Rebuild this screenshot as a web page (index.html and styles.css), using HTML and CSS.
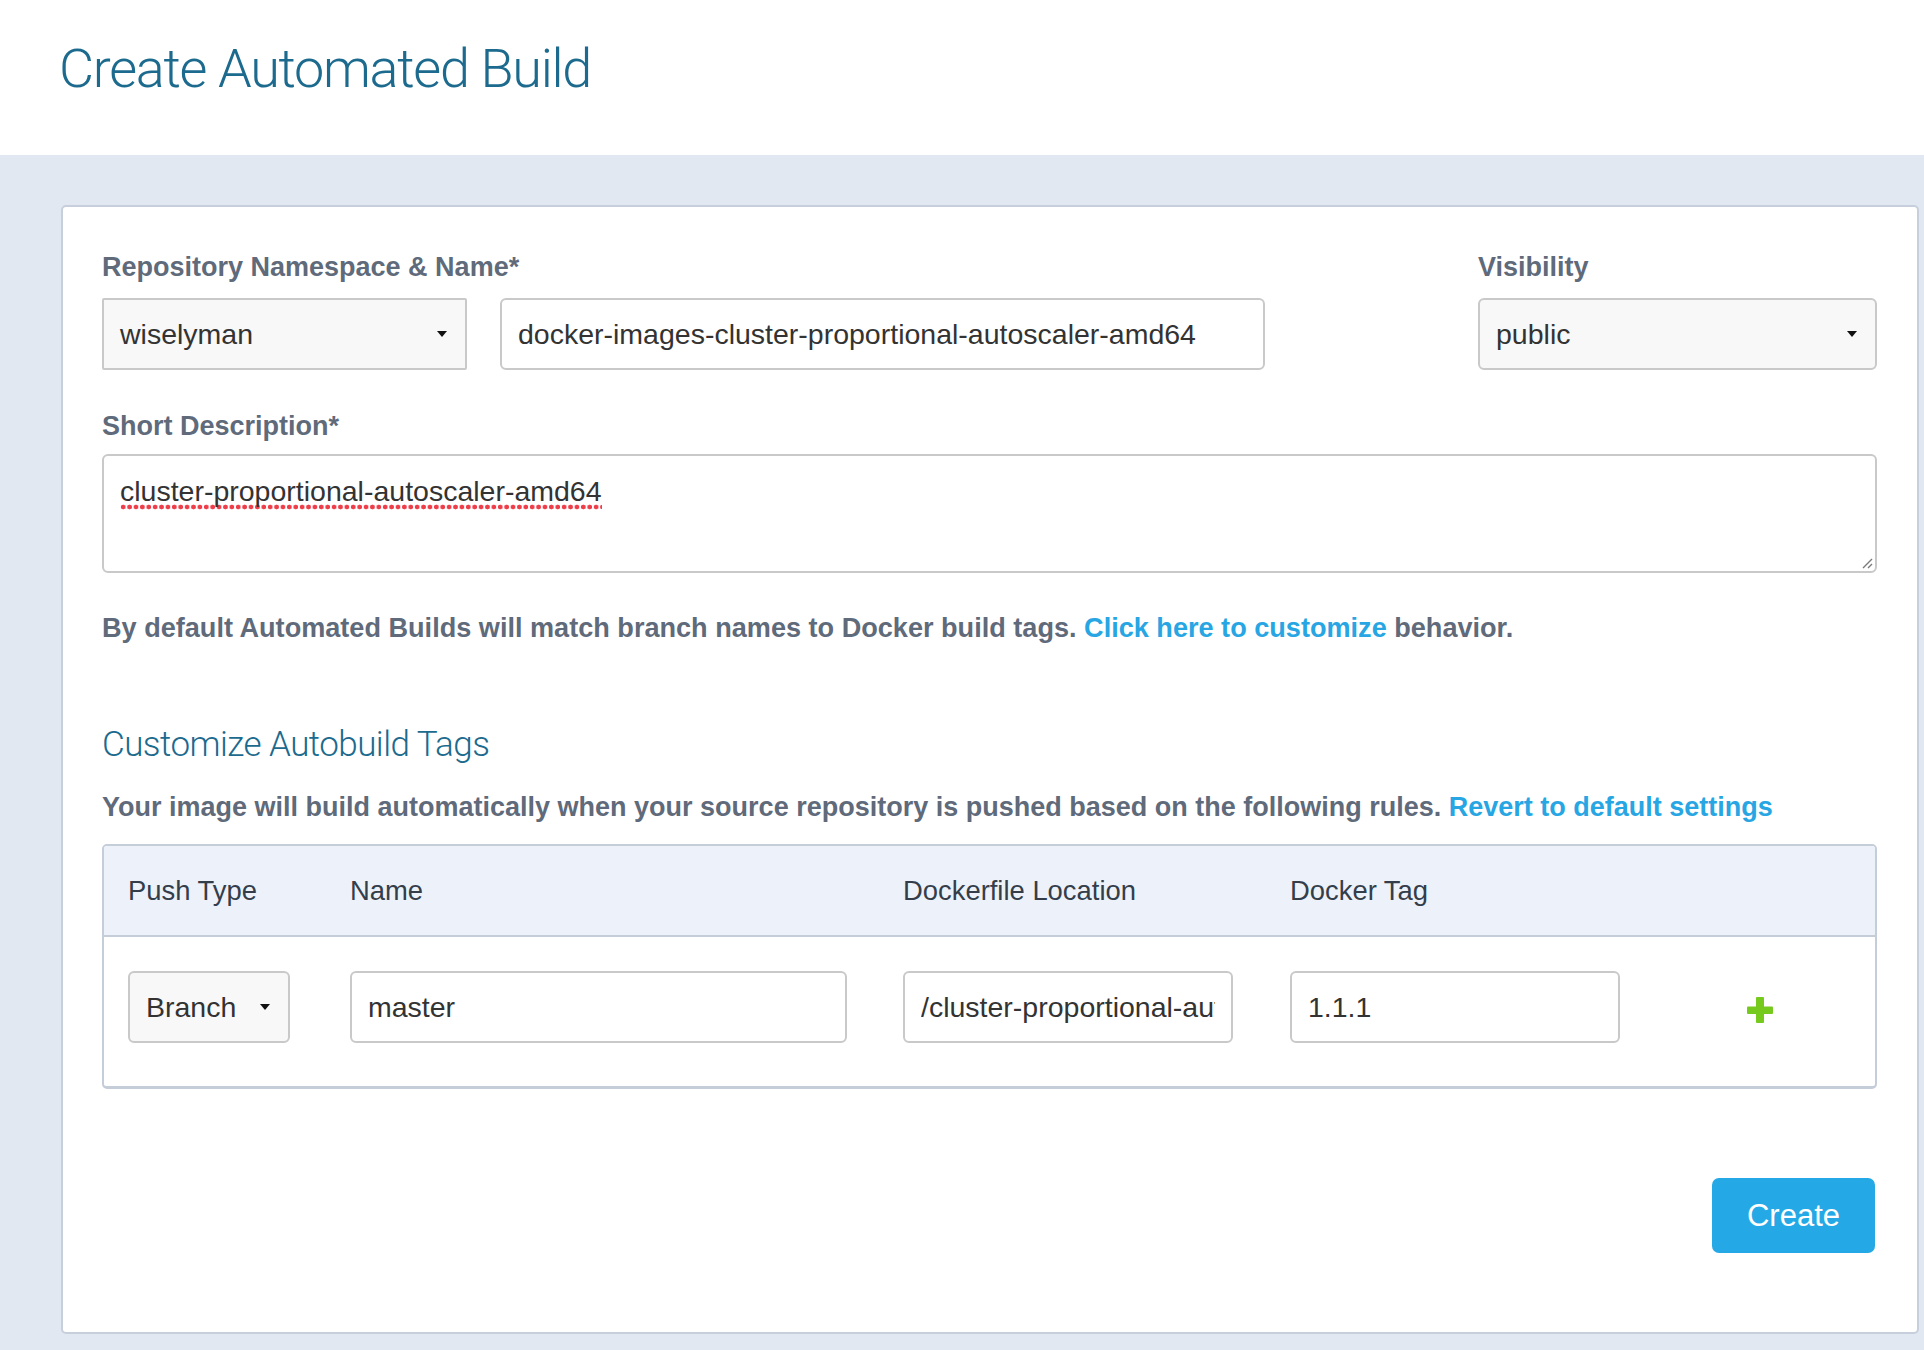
FILE: index.html
```html
<!DOCTYPE html>
<html lang="en">
<head>
<meta charset="utf-8">
<title>Create Automated Build</title>
<link rel="stylesheet" href="styles.css">
</head>
<body>
<header class="page-header">
  <h1 class="page-title">Create Automated Build</h1>
</header>
<main class="page-body">
  <section class="card">
    <div class="top-row">
      <div class="group group-repo">
        <label class="field-label">Repository Namespace &amp; Name*</label>
        <div class="repo-fields">
          <div class="select select-namespace"><span>wiselyman</span><i class="caret"></i></div>
          <input class="input input-name" type="text" value="docker-images-cluster-proportional-autoscaler-amd64">
        </div>
      </div>
      <div class="group group-visibility">
        <label class="field-label">Visibility</label>
        <div class="select select-visibility"><span>public</span><i class="caret"></i></div>
      </div>
    </div>

    <label class="field-label label-desc">Short Description*</label>
    <div class="textarea">
      <span class="misspelled">cluster-proportional-autoscaler-amd64</span>
      <svg class="grip" width="12" height="12" viewBox="0 0 12 12"><path d="M11 2 L2 11 M11 7 L7 11" stroke="#7a7a7a" stroke-width="1.4" fill="none"/></svg>
    </div>

    <p class="help">By default Automated Builds will match branch names to Docker build tags. <a class="link" href="#">Click here to customize</a> behavior.</p>

    <h2 class="section-title">Customize Autobuild Tags</h2>
    <p class="help help-rules">Your image will build automatically when your source repository is pushed based on the following rules. <a class="link" href="#">Revert to default settings</a></p>

    <div class="tags-table">
      <div class="tags-grid tags-head">
        <div class="th">Push Type</div>
        <div class="th">Name</div>
        <div class="th">Dockerfile Location</div>
        <div class="th">Docker Tag</div>
        <div class="th"></div>
      </div>
      <div class="tags-grid tags-row">
        <div class="td"><div class="select select-branch"><span>Branch</span><i class="caret"></i></div></div>
        <div class="td"><input class="input input-master" type="text" value="master"></div>
        <div class="td"><input class="input input-dockerfile" type="text" value="/cluster-proportional-autoscaler-amd64/"></div>
        <div class="td"><input class="input input-tag" type="text" value="1.1.1"></div>
        <div class="td td-plus">
          <svg class="plus" width="26" height="26" viewBox="0 0 26 26"><rect x="9" y="0" width="8" height="26" rx="1" fill="#76c91d"/><rect x="0" y="9.5" width="26" height="7.5" rx="1" fill="#76c91d"/></svg>
        </div>
      </div>
    </div>

    <div class="actions">
      <button class="btn-create" type="button">Create</button>
    </div>
  </section>
</main>
</body>
</html>
```

FILE: styles.css
```css
* { box-sizing: border-box; }

html, body {
  margin: 0;
  padding: 0;
}

body {
  background: #e1e8f1;
  font-family: "Liberation Sans", Arial, sans-serif;
  color: #333;
}

.page-header {
  background: #fff;
  height: 155px;
  padding: 37px 0 0 59px;
}

.page-title {
  margin: 0;
  font-family: Roboto, "Liberation Sans", sans-serif;
  font-weight: 300;
  font-size: 54px;
  letter-spacing: -1.3px;
  line-height: 64px;
  color: #1c6a8e;
}

.page-body {
  padding: 50px 5px 16px 61px;
}

.card {
  background: #fff;
  border: 2px solid #c6cfdb;
  border-radius: 5px;
  padding: 42px 40px 79px 39px;
}

.top-row {
  display: flex;
  justify-content: space-between;
  align-items: flex-start;
}

.field-label {
  display: block;
  font-weight: bold;
  font-size: 27px;
  line-height: 36px;
  color: #5f6a7a;
  margin-bottom: 13px;
}

.repo-fields {
  display: flex;
  gap: 33px;
}

.select {
  position: relative;
  display: flex;
  align-items: center;
  height: 72px;
  border: 2px solid #c9c9c9;
  background: #f8f8f8;
  padding: 0 16px;
  font-size: 28.5px;
  color: #333;
  border-radius: 6px;
}

.caret {
  position: absolute;
  right: 18px;
  top: 50%;
  margin-top: -3px;
  width: 0;
  height: 0;
  border-left: 5px solid transparent;
  border-right: 5px solid transparent;
  border-top: 6px solid #111;
}

.select-namespace {
  width: 365px;
  border-radius: 2px;
}

.select-visibility {
  width: 399px;
}

.input {
  display: block;
  height: 72px;
  border: 2px solid #c9c9c9;
  border-radius: 6px;
  background: #fff;
  padding: 0 16px;
  font-family: "Liberation Sans", Arial, sans-serif;
  font-size: 28.5px;
  color: #333;
  outline: none;
}

.input-name { width: 765px; }

.label-desc {
  margin-top: 38px;
  margin-bottom: 10px;
}

.textarea {
  position: relative;
  height: 119px;
  border: 2px solid #c9c9c9;
  border-radius: 6px;
  padding: 17px 16px;
  font-size: 28.5px;
  line-height: 36px;
  color: #333;
}

.misspelled {
  padding-bottom: 3px;
  background-image: radial-gradient(circle at 3.2px 3px, #ee3e4a 0, #ee3e4a 2.1px, rgba(238, 62, 74, 0) 2.7px);
  background-size: 6.4px 6px;
  background-repeat: repeat-x;
  background-position: left bottom;
}

.grip {
  position: absolute;
  right: 2px;
  bottom: 2px;
}

.help {
  margin: 37px 0 0;
  font-weight: bold;
  font-size: 27.1px;
  line-height: 36px;
  color: #5f6a7a;
}

.link {
  color: #27a6e3;
  text-decoration: none;
}

.section-title {
  margin: 77px 0 0;
  font-family: Roboto, "Liberation Sans", sans-serif;
  font-weight: 300;
  font-size: 35px;
  letter-spacing: -0.55px;
  line-height: 44px;
  color: #1c6a8e;
}

.help-rules {
  margin-top: 22px;
  font-size: 27px;
}

.tags-table {
  margin-top: 19px;
  border: 2px solid #c5cdd9;
  border-bottom-width: 3px;
  border-radius: 5px;
  overflow: hidden;
}

.tags-grid {
  display: grid;
  grid-template-columns: 222px 553px 387px 420px 100px;
  align-items: center;
  padding-left: 24px;
}

.tags-head {
  height: 91px;
  background: #edf2fa;
  border-bottom: 2px solid #c5cdd9;
  font-size: 27.4px;
  color: #343e4b;
}

.tags-row {
  padding-top: 34px;
  padding-bottom: 43px;
}

.select-branch { width: 162px; }
.input-master { width: 497px; }
.input-dockerfile { width: 330px; }
.input-tag { width: 330px; }

.td-plus {
  display: flex;
  justify-content: center;
  padding-top: 6px;
}

.actions {
  display: flex;
  justify-content: flex-end;
  margin-top: 89px;
  padding-right: 2px;
}

.btn-create {
  width: 163px;
  height: 75px;
  border: none;
  border-radius: 7px;
  background: #24a9e6;
  color: #fff;
  font-family: "Liberation Sans", Arial, sans-serif;
  font-size: 31px;
  cursor: pointer;
}
```
